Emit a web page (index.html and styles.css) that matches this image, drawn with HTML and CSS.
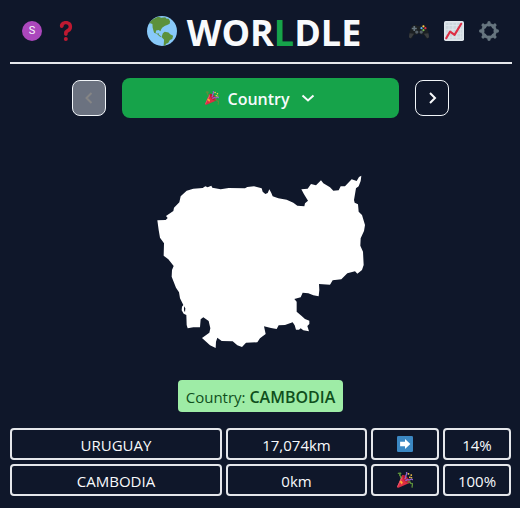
FILE: index.html
```html
<!DOCTYPE html>
<html lang="en">
<head>
<meta charset="utf-8">
<meta name="viewport" content="width=device-width, initial-scale=1">
<title>Worldle</title>
<link rel="stylesheet" href="styles.css">
</head>
<body>
<svg class="defs" aria-hidden="true">
  <symbol id="popper" viewBox="0 0 36 36">
    <path fill="#dd2e44" d="M11.600 7.600c-.2.200-.3.400-.4.600L.5 32.500c-.6 1.700 1.300 3.600 3 3L27.800 24.800c2-1.900-.6-7.300-5.200-11.900C18 8.300 13.400 5.700 11.600 7.600z"/>
    <path fill="#ea596e" d="M11 9L.4 32.900c-.1.500.3 1.300.8 1.900L13 12z"/>
    <path fill="#be1931" d="M24 13c5 5 7 10 5 12s-8-1-12-5-6-10-4-12 7 1 11 5z"/>
    <path fill="#ffac33" d="M9 19l4 4-2 5-5-6z"/>
    <path fill="none" stroke="#9266cc" stroke-width="3" stroke-linecap="round" d="M18 15c4-4 0-6 3-9s-1-4 1-5M20 19c5-5 7 1 10-2s3 1 5 0"/>
    <path fill="none" stroke="#5c913b" stroke-width="3" stroke-linecap="round" d="M8 13c3-4-5-5-1-8s-1-3-4-2M25 23c8-3 3 4 8 3s0 6 1 8"/>
    <g fill="#ffcc4d"><circle cx="26" cy="4" r="2"/><circle cx="32" cy="7" r="2"/><circle cx="29" cy="12" r="2"/><circle cx="33" cy="13" r="1.500"/></g>
  </symbol>
</svg>
<div class="page">
  <header class="header">
    <div class="tools">
      <button class="avatar" type="button" aria-label="Account">S</button>
      <button class="tool" type="button" aria-label="Help">
        <svg width="20" height="20" viewBox="0 0 36 36" fill="#be1931"><path d="M18 0C11 0 7 4 7 9c0 2 1.300 3.500 3.300 3.500 2.400 0 3.300-1.800 3.500-3.500.3-2 1.700-3.200 4.200-3.200 3 0 4.700 1.700 4.700 4.300 0 3.200-2.400 4.300-4.700 5.500-2.800 1.500-3.500 3-3.500 6.400v1.500c0 2 1.300 3.200 3.200 3.200s3.300-1.200 3.300-3.200c0-2 .3-2.500 2.500-3.700C27 17.800 29 15 29 10.200 29 4 24.500 0 18 0z"/><circle cx="17.700" cy="32.300" r="3.600"/></svg>
      </button>
    </div>
    <h1 class="title">
      <svg width="30" height="30" viewBox="0 0 36 36" aria-hidden="true"><circle cx="18" cy="18" r="18" fill="#88c9f9"/><path fill="#5c913b" d="M5 5.600C8 3 11 1.400 14 .8l3 1.200 5-.6 1 1.600 3 .2 1.700 3-.5 3-3 1.500-2.500 1.100-3.200 2-1.500 2-.9 2.500-2.100-1.600-3.100.7-.5 2.600 2 1.300 1.400-.9.400 2 2.300 1.500.6 1.500-2.200-1-3.200-3-3.200-1.400L6.800 14l-.3-4.500L4 8.700 2.300 9.500z"/><path fill="#5c913b" d="M19 20.600l2.300-1.600 4.500.7 2 2.300 3.500 1.800-1 3.700-2.800 1.200-2.100 3.800-2.500.7-1.200 2.600-1.700-.8.500-6.500-3-3.200z"/></svg>
      <span class="wordmark">WOR<span class="accent">L</span>DLE</span>
    </h1>
    <div class="tools tools-end">
      <button class="tool" type="button" aria-label="Games">
        <svg width="20" height="20" viewBox="0 0 36 36"><path fill="#1b1f22" d="M5 10c1-3 8-4 10-1h6c2-3 9-2 10 1 3 6 5 13 5 18 0 4-4 5-6 2l-4-6c-2 2-5 1-6-1h-4c-1 2-4 3-6 1l-4 6c-2 3-6 2-6-2 0-5 2-12 5-18z"/><path fill="#3a3d40" d="M1 22l8 1-5 7c-2 2-4 0-4-2zM35 22l-8 1 5 7c2 2 4 0 4-2z"/><path fill="#66757f" d="M8 9h3v3h3v3h-3v3H8v-3H5v-3h3z"/><circle cx="14" cy="20" r="3" fill="#55606a"/><circle cx="22" cy="20" r="3" fill="#55606a"/><circle cx="26" cy="9.500" r="2" fill="#ffcc4d"/><circle cx="22.500" cy="13" r="2" fill="#55acee"/><circle cx="29.500" cy="13" r="2" fill="#dd2e44"/><circle cx="26" cy="16.500" r="2" fill="#77b255"/></svg>
      </button>
      <button class="tool" type="button" aria-label="Statistics">
        <svg width="20" height="20" viewBox="0 0 36 36"><rect width="36" height="36" rx="3" fill="#e1e8ed"/><path fill="#ccd6dd" d="M3 3h30v30H3z"/><path stroke="#e1e8ed" stroke-width="1.500" d="M9 3v30M16 3v30M23 3v30M30 3v30M3 8h30M3 15h30M3 22h30M3 29h30"/><path fill="none" stroke="#dd2e44" stroke-width="3.800" stroke-linecap="round" stroke-linejoin="round" d="M4 31l7-12 8 6L31 5"/></svg>
      </button>
      <button class="tool" type="button" aria-label="Settings">
        <svg width="20" height="20" viewBox="0 0 36 36"><g stroke="#66757f" stroke-width="6" stroke-linecap="round"><path d="M18 3V7M18 29v4M3 18H7M29 18h4M7.400 7.400l3 3M25.600 25.600l3 3M28.600 7.400l-3 3M10.400 25.600l-3 3"/></g><circle cx="18" cy="18" r="11.500" fill="none" stroke="#66757f" stroke-width="5"/></svg>
      </button>
    </div>
  </header>
  <main class="main">
    <nav class="rounds" aria-label="Rounds">
      <button class="step" type="button" disabled aria-label="Previous round">
        <svg width="16" height="16" viewBox="0 0 16 16"><path d="M10.500 3L5.500 8l5 5"/></svg>
      </button>
      <button class="round" type="button">
        <svg class="emoji" width="14" height="14"><use href="#popper"/></svg>
        <span class="label">Country</span>
        <svg class="chevron" width="16" height="16" viewBox="0 0 16 16"><path d="M2.500 5.500L8 10.500l5.500-5"/></svg>
      </button>
      <button class="step" type="button" aria-label="Next round">
        <svg width="16" height="16" viewBox="0 0 16 16"><path d="M6 3L11 8l-5 5"/></svg>
      </button>
    </nav>
    <div class="shape">
      <svg width="221" height="190" viewBox="0 0 663 570" role="img" aria-label="Country outline">
        <path fill="#fff" fill-rule="evenodd" d="M22 166L47 165 53 159 48 153 70 138 72 128 88 112 92 94 110 77 130 71 158 69 166 64 173 67 184 62 187 68 212 73 236 69 285 70 292 66 312 64 335 70 338 80 346 87 353 84 358 73 364 84 368 94 385 100 410 104 430 113 442 122 463 124 465 115 474 107 462 88 454 73 473 71 483 57 498 61 513 46 520 55 540 67 550 77 566 76 572 64 585 64 605 43 620 48 627 36 634 32 632 48 626 64 618 70 612 105 614 113 624 118 626 140 636 150 645 180 642 198 632 220 631 242 639 260 641 300 636 315 622 326 615 319 592 325 574 343 548 346 540 359 507 357 508 375 506 394 490 391 475 385 458 383 452 397 433 402 440 410 440 440 455 453 465 462 478 467 478 477 472 483 477 499 460 496 452 490 447 494 438 494 434 481 428 472 405 480 386 481 380 492 363 489 342 484 347 507 330 520 322 532 288 533 276 546 262 541 248 529 215 528 202 518 198 530 197 549 180 541 156 519 178 503 181 490 176 468 160 457 152 463 150 487 130 487 113 490 110 480 109 450 101 446 95 436 96 425 100 420 90 400 87 382 78 368 65 335 66 315 71 303 55 283 41 272 42 235 30 218 26 195ZM102 424L106 430 105 442 102 436Z"/>
      </svg>
    </div>
    <p class="answer">Country: <strong>CAMBODIA</strong></p>
    <table class="guesses" aria-label="Guesses">
      <tbody>
        <tr><td>URUGUAY</td><td>17,074km</td><td class="hint"><svg width="16" height="16" viewBox="0 0 36 36" role="img" aria-label="East"><rect width="36" height="36" rx="3" fill="#3b88c3"/><path fill="#fff" d="M7 13h11V7l12 11-12 11v-6H7z"/></svg></td><td>14%</td></tr>
        <tr><td>CAMBODIA</td><td>0km</td><td class="hint"><svg width="16" height="16" role="img" aria-label="Correct"><use href="#popper"/></svg></td><td>100%</td></tr>
      </tbody>
    </table>
  </main>
</div>
</body>
</html>
```
FILE: styles.css
```css
* { box-sizing: border-box; }

body {
  margin: 0;
  background: #0f172a;
  color: #f8fafc;
  font: 15px/24px "Segoe UI", "Open Sans", "Noto Sans", sans-serif;
}

button {
  margin: 0;
  padding: 0;
  border: 0;
  background: none;
  color: inherit;
  font: inherit;
}

svg { display: block; }

.defs {
  position: absolute;
  width: 0;
  height: 0;
}

.page { padding: 0 8px 0 10px; }

.header {
  display: grid;
  grid-template-columns: 1fr auto 1fr;
  align-items: center;
  height: 64px;
  border-bottom: 2px solid #e5e7eb;
}

.tools {
  display: flex;
  align-items: center;
  gap: 14px;
  padding: 0 12px;
}

.tools-end {
  justify-content: flex-end;
  gap: 15px;
  padding: 0 13px 0 0;
}

.avatar {
  width: 20px;
  height: 20px;
  border-radius: 50%;
  background: #ab47bc;
  font: 11px/20px Roboto, sans-serif;
}

.title {
  display: flex;
  align-items: center;
  gap: 10px;
  margin: 0;
  padding-right: 14px;
  font-size: 36px;
  line-height: 40px;
  font-weight: 700;
}

.wordmark { padding-top: 4px; }

.accent { color: #16a34a; }

.main { padding-right: 1px; }

.rounds {
  display: flex;
  justify-content: center;
  align-items: center;
  gap: 16px;
  margin-top: 14px;
}

.step {
  display: grid;
  place-items: center;
  width: 34px;
  height: 36px;
  border: 1px solid #f1f5f9;
  border-radius: 8px;
}

.step:disabled {
  background: #6b7280;
  color: #858585;
}

.step path,
.chevron path {
  fill: none;
  stroke: currentColor;
  stroke-width: 2;
}

.round {
  display: flex;
  flex: 0 1 277px;
  justify-content: center;
  align-items: center;
  height: 40px;
  border-radius: 8px;
  background: #16a34a;
  font-size: 16px;
  font-weight: 600;
}

.label { padding-top: 2px; }

.emoji { margin-right: 8px; }

.chevron { margin-left: 10px; }

.shape {
  display: flex;
  justify-content: center;
  margin: 47px 0 25px;
}

.answer {
  width: fit-content;
  margin: 0 auto 16px;
  padding: 5px 8px 3px;
  border-radius: 4px;
  background: #9eeca6;
  color: #0f4f1c;
}

.answer strong {
  font-size: 16px;
  font-weight: 600;
}

.guesses {
  display: block;
  text-align: center;
}

.guesses tbody {
  display: grid;
  gap: 4px;
}

.guesses tr {
  display: grid;
  grid-template-columns: 212fr 141fr 68fr 68fr;
  gap: 4px;
}

.guesses td {
  display: flex;
  justify-content: center;
  align-items: center;
  height: 32px;
  padding: 2px 0 0;
  border: 2px solid #e5e7eb;
  border-radius: 4px;
}

.guesses .hint { padding: 0; }
```
